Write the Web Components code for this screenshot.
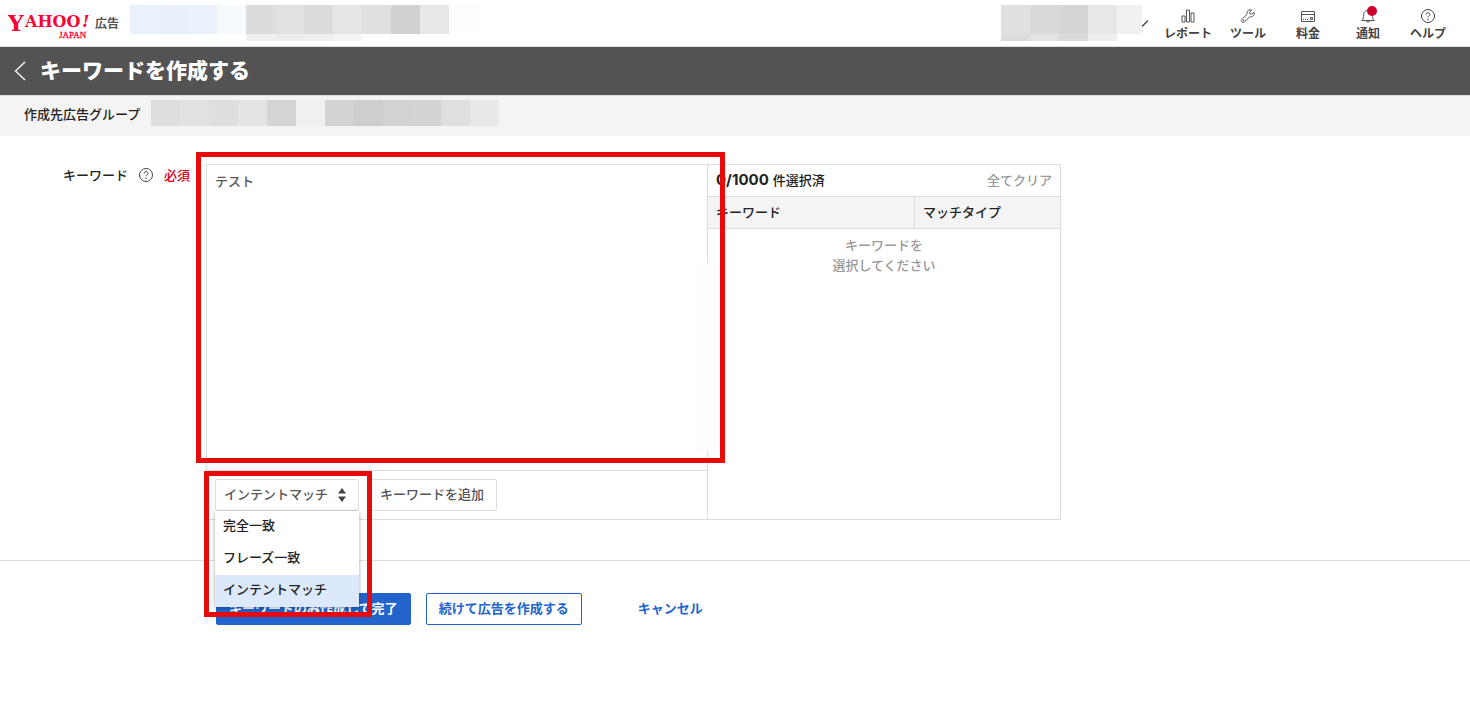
<!DOCTYPE html>
<html lang="ja">
<head>
<meta charset="utf-8">
<meta name="viewport" content="width=device-width, initial-scale=1">
<title>キーワードを作成する</title>
<style>
  body {
    margin: 0;
    background: #fff;
    color: #222;
    font: 500 13px/20px "Noto Sans CJK JP", sans-serif;
    --line: #ddd;
    --blue: #2264cc;
    --red: #e60a0a;
  }
</style>
</head>
<body>
<ad-header></ad-header>
<page-title>キーワードを作成する</page-title>
<group-bar>作成先広告グループ</group-bar>
<main>
  <form-row>
    <keyword-editor></keyword-editor>
  </form-row>
  <form-actions></form-actions>
</main>

<script>
const define = (name, html, setup) => {
  const template = document.createElement('template');
  template.innerHTML = '<style>*{box-sizing:border-box}:host{display:block;box-sizing:border-box}button,select,textarea{font:inherit;margin:0}</style>' + html;
  customElements.define(name, class extends HTMLElement {
    constructor() {
      super();
      this.attachShadow({ mode: 'open' }).append(template.content.cloneNode(true));
    }
    connectedCallback() { if (setup) setup(this, this.shadowRoot); }
  });
};

/* Masked text: a strip of flat colour cells */
define('masked-text', `
<style>
  :host { display: flex; height: 29px; }
  :host([size="short"]) { height: 7px; }
  :host([size="medium"]) { height: 26px; }
  span { flex: none; width: 29px; }
</style>`, (host, root) => {
  for (const c of host.getAttribute('cells').split(' ')) {
    const s = document.createElement('span');
    s.style.background = '#' + c;
    root.append(s);
  }
});

define('help-icon', `
<style>:host { display: inline-flex; } svg { display: block; }</style>
<svg width="14" height="14" viewBox="0 0 14 14" fill="none" stroke="currentColor">
  <circle cx="7" cy="7" r="6.5"/>
  <path d="M5.1 5.6C5.1 4.4 5.9 3.6 7 3.6s1.9.8 1.9 1.8C8.9 6.8 7 6.8 7 8.4" />
  <circle cx="7" cy="10.2" r=".7" fill="currentColor" stroke="none"/>
</svg>`);

define('brand-logo', `
<style>
  a { display: flex; align-items: center; color: #555; text-decoration: none; }
  svg { display: block; fill: #ff0033; font-family: "DejaVu Serif", serif; font-weight: 700; }
  span { font-size: 12px; line-height: 20px; font-weight: 700; }
</style>
<a href="#">
  <svg width="87" height="32" viewBox="0 0 87 32" role="img" aria-label="Yahoo! Japan">
    <text x="0" y="24" font-size="22">Y</text>
    <text x="17" y="20" font-size="16">AHOO</text>
    <text x="74" y="20" font-size="17" font-style="italic">!</text>
    <text x="51" y="31" font-size="9" font-weight="400" font-family="Liberation Serif" stroke="#ff0033" stroke-width=".3">JAPAN</text>
  </svg>
  <span>広告</span>
</a>`);

define('nav-item', `
<style>
  :host { width: 60px; }
  a { display: flex; flex-direction: column; align-items: center; color: #444; text-decoration: none; font-size: 12px; line-height: 18px; font-weight: 700; gap: 1px; }
</style>
<a href="#"><slot name="icon"></slot><slot></slot></a>`);

define('ad-header', `
<style>
  header { display: flex; height: 47px; padding: 5px 12px 0 8px; border-bottom: 1px solid var(--line); }
  brand-logo { width: 122px; padding-top: 2px; }
  .account { flex: 1; }
  .lower { margin-left: 116px; }
  .user { width: 141px; overflow: hidden; }
  .arrow { margin: 15px 10px 0 0; width: 6px; height: 7px; }
  nav { display: flex; padding-top: 4px; }
  nav svg { display: block; overflow: visible; fill: none; stroke: #555; }
</style>
<header>
  <brand-logo></brand-logo>
  <div class="account">
    <masked-text cells="e9f1fa e9f0fa e9f1fa f7fafd dcdcdc e1e1e1 dcdcdc e5e5e5 e0e0e0 d1d1d1 e8e8e8 fdfdfd"></masked-text>
    <masked-text class="lower" size="short" cells="f0f0f0 ededed f0f0f0 f5f5f5"></masked-text>
  </div>
  <div class="user">
    <masked-text cells="e0e0e0 dadada d5d5d5 e8e8e8 f1f1f1"></masked-text>
    <masked-text size="short" cells="dcdcdc e3e3e3 dadada eeeeee"></masked-text>
  </div>
  <svg class="arrow" viewBox="0 0 6 7" fill="none" stroke="#444" stroke-width="1.3"><path d="M0 6.5L6 .5"/></svg>
  <nav>
    <nav-item><svg slot="icon" width="14" height="14"><path d="M1 7h3v6H1zM5.500 1h3v12h-3zM10 4h3v9h-3z"/></svg>レポート</nav-item>
    <nav-item><svg slot="icon" width="14" height="14"><path d="M12.900 3.200 10.800 5.200 8.900 4.900 8.700 3.200 10.700 1C8.700 0 6.200 1.300 6 3.600c0 .6 0 1.100.2 1.600L.8 10.500c-1.500 1.600.9 4.100 2.500 2.600L8.700 7.800c2.900.9 5.400-2 4.200-4.600z"/><circle cx="2.500" cy="11.500" r=".5"/></svg>ツール</nav-item>
    <nav-item><svg slot="icon" width="14" height="14"><path d="M.5 2.500h13v10H.5zM.5 5.500h13M2 10.500h1M4 10.500h1M6 10.500h1M9.500 8.500h2v2h-2z"/></svg>料金</nav-item>
    <nav-item><svg slot="icon" width="14" height="14"><path d="M.8 11.500h12.400C11.500 10 11.500 8.500 11.300 5.500 11 0 3 0 2.700 5.500 2.500 8.500 2.500 10 .8 11.500zM5.500 12c.3 1.700 2.700 1.700 3 0"/><circle cx="11" cy="2" r="5" fill="#d0012d" stroke="none"/></svg>通知</nav-item>
    <nav-item><help-icon slot="icon"></help-icon>ヘルプ</nav-item>
  </nav>
</header>`);

define('page-title', `
<style>
  div { display: flex; align-items: center; gap: 14px; height: 49px; padding: 0 14px; background: #535353; color: #fff; border-bottom: 1px solid var(--line); }
  a { color: #fff; }
  svg { display: block; }
  h1 { margin: 0; padding-bottom: 4px; font-size: 21px; line-height: 32px; font-weight: 900; }
</style>
<div>
  <a href="#" aria-label="戻る"><svg width="12" height="20" viewBox="0 0 12 20" fill="none" stroke="currentColor" stroke-width="1.3"><path d="M11 1L1.500 10l9.500 9"/></svg></a>
  <h1><slot></slot></h1>
</div>`);

define('group-bar', `
<style>
  div { display: flex; gap: 10px; height: 40px; padding: 4px 24px; background: #f4f4f4; }
  span { width: 117px; line-height: 28px; }
</style>
<div><span><slot></slot></span>
<masked-text size="medium" cells="dedede e2e2e2 dedede e4e4e4 d4d4d4 f0f0f0 d3d3d3 cecece d2d2d2 d3d3d3 dfdfdf e8e8e8"></masked-text></div>`);

define('form-row', `
<style>
  section { display: grid; grid-template-columns: 190px minmax(0, 855px); gap: 16px; padding: 28px 24px 40px 0; }
  .label { display: flex; justify-content: flex-end; align-items: center; height: 22px; }
  help-icon { margin: 0 11px; color: #444; }
  b { color: #d0021b; font-weight: 500; }
</style>
<section>
  <div class="label"><label>キーワード</label><help-icon></help-icon><b>必須</b></div>
  <slot></slot>
</section>`, (host, root) => {
  root.querySelector('label').onclick = () => host.querySelector('keyword-editor').shadowRoot.querySelector('keyword-input').shadowRoot.querySelector('textarea').focus();
});

define('match-select', `
<style>
  :host { position: relative; width: 144px; }
  select { display: block; width: 100%; height: 32px; padding: 0 8px 2px; appearance: none; border: 1px solid var(--line); border-radius: 2px; background: #fff; color: #555; line-height: 20px; }
  svg { position: absolute; right: 12px; top: 9px; pointer-events: none; }
  ul { position: absolute; z-index: 2; top: 32px; left: 0; right: 0; margin: 0; padding: 0; list-style: none; background: #fff; box-shadow: 0 1px 4px rgba(0,0,0,.35); }
  li { height: 32px; padding: 0 8px; line-height: 28px; }
  li[aria-selected="true"] { background: #dce8fc; }
</style>
<select aria-label="マッチタイプ"><option>完全一致</option><option>フレーズ一致</option><option selected>インテントマッチ</option></select>
<svg width="10" height="14" viewBox="0 0 10 14" fill="#444"><path d="M1 5.500 5 0l4 5.500zM1 8.500 5 14l4-5.500z"/></svg>
<ul role="listbox">
  <li role="option">完全一致</li><li role="option">フレーズ一致</li><li role="option" aria-selected="true">インテントマッチ</li>
</ul>`);

/* Red frame laid over the part of the form it points out */
define('call-out', `
<style>
  :host { position: absolute; z-index: 3; border: 5px solid var(--red); pointer-events: none; }
</style>`);

define('keyword-input', `
<style>
  :host { position: relative; display: flex; flex-direction: column; min-width: 0; }
  textarea { display: block; flex: 1; width: 100%; padding: 6px 8px; border: 0; resize: none; outline: 0; background: transparent; color: #555; line-height: 20px; }
  .tools { display: flex; gap: 8px; padding: 8px; border-top: 1px solid var(--line); }
  button { height: 32px; padding: 0 12px 2px; border: 1px solid var(--line); border-radius: 2px; background: #fff; color: #555; line-height: 28px; }
  .track { position: absolute; right: -12px; top: 98px; width: 21px; height: 188px; background: #fdfdfd; }
  .text { top: -13px; left: -11px; right: -18px; height: 311px; }
  .match { top: 306px; left: -3px; width: 168px; height: 146px; }
</style>
<textarea aria-label="キーワード">テスト</textarea>
<div class="tools"><match-select></match-select><button type="button">キーワードを追加</button></div>
<div class="track"></div>
<call-out class="text"></call-out>
<call-out class="match"></call-out>`);

define('selected-keywords', `
<style>
  :host { border-left: 1px solid var(--line); }
  .head { display: flex; justify-content: space-between; align-items: center; height: 32px; padding: 0 8px 2px; border-bottom: 1px solid var(--line); }
  b { font: 700 15px/20px Inter, sans-serif; margin-right: 4px; }
  button { padding: 0; border: 0; background: none; color: #999; }
  table { width: 100%; border-collapse: separate; border-spacing: 0; table-layout: fixed; }
  th { height: 32px; padding: 0 8px 2px; text-align: left; font-weight: 500; background: #f4f4f4; border-bottom: 1px solid var(--line); }
  th + th { width: 146px; border-left: 1px solid var(--line); }
  td { padding: 6px 8px; text-align: center; color: #999; }
</style>
<div class="head"><span><b>0/1000</b>件選択済</span><button type="button">全てクリア</button></div>
<table>
  <thead><tr><th>キーワード</th><th>マッチタイプ</th></tr></thead>
  <tbody><tr><td colspan="2">キーワードを<br>選択してください</td></tr></tbody>
</table>`);

define('keyword-editor', `
<style>
  .panel { display: grid; grid-template-columns: minmax(0, 1fr) 353px; min-height: 356px; border: 1px solid var(--line); }
</style>
<div class="panel"><keyword-input></keyword-input><selected-keywords></selected-keywords></div>`);

define('form-actions', `
<style>
  div { display: flex; align-items: center; padding: 32px 24px 32px 216px; border-top: 1px solid var(--line); }
  button { height: 32px; padding: 0 12px 2px; border: 1px solid var(--blue); border-radius: 2px; background: #fff; color: var(--blue); font-weight: 700; line-height: 28px; }
  .primary { margin-right: 15px; background: var(--blue); color: #fff; }
  a { margin-left: 56px; padding-bottom: 2px; color: var(--blue); font-weight: 700; text-decoration: none; }
</style>
<div>
  <button class="primary" type="submit">キーワードのみ作成して完了</button>
  <button type="button">続けて広告を作成する</button>
  <a href="#">キャンセル</a>
</div>`);
</script>
</body>
</html>
